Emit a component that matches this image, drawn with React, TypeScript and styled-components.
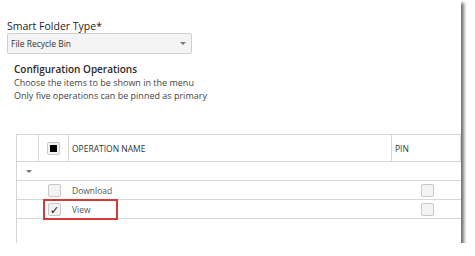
import React from 'react';
import styled, { createGlobalStyle } from 'styled-components';

const GlobalStyle = createGlobalStyle`
  body {
    margin: 0;
    background: #ffffff;
    font-family: 'Open Sans', 'Noto Sans', sans-serif;
  }
`;

const operations = [
  { name: 'Download', checked: false, highlight: false },
  { name: 'View', checked: true, highlight: true },
];

const App = () => {
  return (
    <>
      <GlobalStyle />
      <Panel>
        <FieldLabel>Smart Folder Type*</FieldLabel>
        <Select>
          <span>File Recycle Bin</span>
          <Caret />
        </Select>
        <Section>
          <SectionTitle>Configuration Operations</SectionTitle>
          <Hint>Choose the items to be shown in the menu</Hint>
          <Hint>Only five operations can be pinned as primary</Hint>
        </Section>
        <Table>
          <HeaderRow>
            <HeadCell />
            <HeadCell center>
              <Box>
                <Fill />
              </Box>
            </HeadCell>
            <HeadCell>OPERATION NAME</HeadCell>
            <HeadCell last>PIN</HeadCell>
          </HeaderRow>
          <GroupRow>
            <Caret />
          </GroupRow>
          {operations.map((op) => (
            <Row key={op.name}>
              <span />
              <Cell center>
                <Box>{op.checked && <Tick>✓</Tick>}</Box>
              </Cell>
              <Cell>{op.name}</Cell>
              <Cell center>
                <Box />
              </Cell>
              {op.highlight && <Highlight />}
            </Row>
          ))}
          <Filler />
        </Table>
      </Panel>
    </>
  );
};

const Panel = styled.div`
  width: 461px;
  height: 243px;
  display: flex;
  flex-direction: column;
  background: #fff;
  box-shadow: 3px 3px 3px rgba(0, 0, 0, 0.55);
`;

const FieldLabel = styled.div`
  margin: 20px 0 0 7px;
  font-size: 10.5px;
  line-height: 13px;
  color: #222;
`;

const Select = styled.div`
  box-sizing: border-box;
  width: 185px;
  height: 21px;
  margin-left: 7px;
  padding: 0 5px 0 3px;
  display: flex;
  align-items: center;
  justify-content: space-between;
  background: #f4f4f4;
  border: 1px solid #cfcfcf;
  border-radius: 2px;
  font-size: 8.5px;
  color: #333;
`;

const Caret = styled.i`
  width: 0;
  height: 0;
  border-left: 3px solid transparent;
  border-right: 3px solid transparent;
  border-top: 3px solid #777;
`;

const Section = styled.div`
  margin: 9px 0 0 14px;
  color: #444;
`;

const SectionTitle = styled.div`
  font-size: 10px;
  font-weight: 600;
  line-height: 13px;
  color: #2a2a2a;
`;

const Hint = styled.div`
  font-size: 9px;
  line-height: 13px;
`;

const Table = styled.div`
  flex: 1;
  margin: 32px 0 0 16px;
  display: flex;
  flex-direction: column;
  border-left: 1px solid #d6d6d6;
  font-size: 8.5px;
  color: #333;
`;

const columns = '22px 30px 1fr 68px';

const HeaderRow = styled.div`
  display: grid;
  grid-template-columns: ${columns};
  height: 26px;
  border-top: 1px solid #d6d6d6;
  border-bottom: 1px solid #d6d6d6;
  border-right: 1px solid #d6d6d6;
`;

const HeadCell = styled.div<{ center?: boolean; last?: boolean }>`
  display: flex;
  align-items: center;
  justify-content: ${(p) => (p.center ? 'center' : 'flex-start')};
  padding-left: ${(p) => (p.center ? 0 : 3)}px;
  border-right: ${(p) => (p.last ? 'none' : '1px solid #d6d6d6')};
`;

const GroupRow = styled.div`
  height: 18px;
  display: flex;
  align-items: center;
  padding-left: 9px;
  border-bottom: 1px solid #d6d6d6;
`;

const Row = styled.div`
  position: relative;
  display: grid;
  grid-template-columns: ${columns};
  height: 18px;
  border-bottom: 1px solid #d6d6d6;
  color: #555;
`;

const Cell = styled.div<{ center?: boolean }>`
  display: flex;
  align-items: center;
  justify-content: ${(p) => (p.center ? 'center' : 'flex-start')};
  padding-left: ${(p) => (p.center ? 0 : 3)}px;
`;

const Box = styled.div`
  box-sizing: border-box;
  width: 13px;
  height: 13px;
  border: 1px solid #c8c8c8;
  border-radius: 2px;
  background: #f3f3f3;
  display: flex;
  align-items: center;
  justify-content: center;
`;

const Fill = styled.div`
  width: 7px;
  height: 7px;
  background: #000;
`;

const Tick = styled.span`
  font-size: 11px;
  line-height: 1;
  color: #111;
`;

const Highlight = styled.div`
  position: absolute;
  left: 26px;
  top: -1px;
  width: 75px;
  height: 21px;
  box-sizing: border-box;
  border: 2px solid #d63b3b;
`;

const Filler = styled.div`
  flex: 1;
`;

export default App;
